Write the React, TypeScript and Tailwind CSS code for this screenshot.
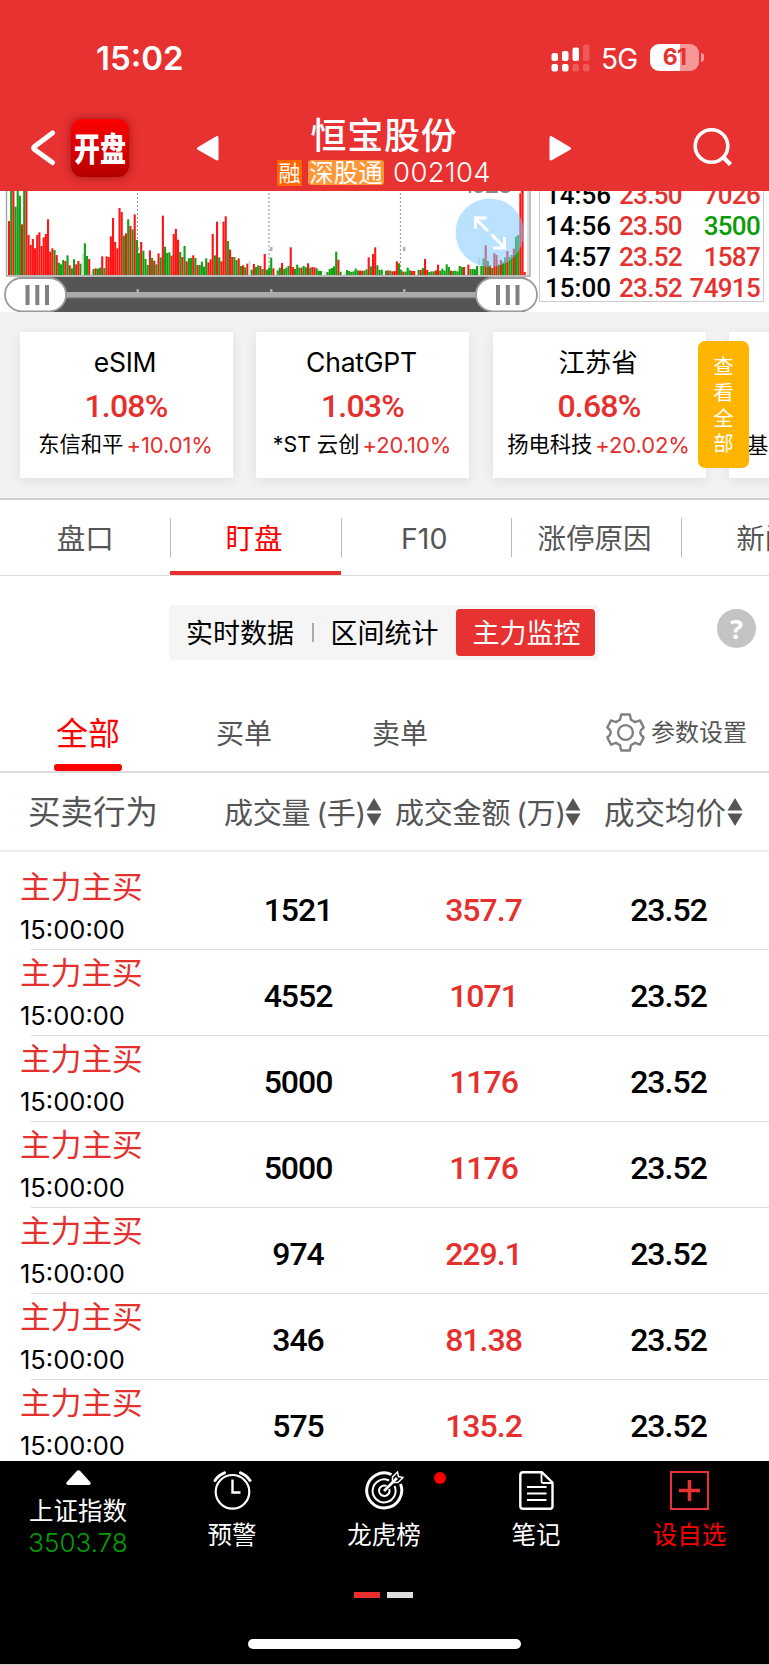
import { useState } from 'react';

type Trade = { time: string; price: string; volume: string; down?: boolean };

const trades: Trade[] = [
  { time: '14:56', price: '23.50', volume: '7026' },
  { time: '14:56', price: '23.50', volume: '3500', down: true },
  { time: '14:57', price: '23.52', volume: '1587' },
  { time: '15:00', price: '23.52', volume: '74915' },
];

const concepts = [
  { name: 'eSIM', change: '1.08%', stock: '东信和平', stockChange: '+10.01%' },
  { name: 'ChatGPT', change: '1.03%', stock: '*ST 云创', stockChange: '+20.10%' },
  { name: '江苏省', change: '0.68%', stock: '扬电科技', stockChange: '+20.02%' },
];

const orders = [
  { volume: '1521', amount: '357.7' },
  { volume: '4552', amount: '1071' },
  { volume: '5000', amount: '1176' },
  { volume: '5000', amount: '1176' },
  { volume: '974', amount: '229.1' },
  { volume: '346', amount: '81.38' },
  { volume: '575', amount: '135.2' },
];

// 成交量柱：颜色 + 顶部位置，n 为空
const volumeBars = (
  'r108 g0 r0 g65 g0 g32 r118 g0 r0 r150 r180 r162 r190 r150 r142 r183 r157 r147 r103 r200 ' +
  'r190 g195 r210 g233 g238 g225 r228 g211 r241 g250 g223 r238 r228 g236 w205 g175 g213 r222 w260 g252 ' +
  'r250 g251 g248 r214 g249 r214 r216 r154 r99 r171 r190 r69 r81 g152 r145 g103 r123 g133 r88 g165 ' +
  'g204 r171 g197 g222 g240 r196 g219 r227 g238 r205 g217 r92 g185 g204 g202 r212 r147 r132 r164 g201 ' +
  'r216 g183 r229 g220 g219 r211 g219 r240 g240 g230 g245 g220 r232 r223 r147 g211 r110 g217 r229 r110 ' +
  'r94 g168 r194 r216 g216 g225 r220 g243 r241 g247 r236 w228 g254 r237 g246 g241 r243 g252 r207 g254 ' +
  'g248 g218 r250 n g256 g248 r234 g252 g248 g243 r187 r246 g252 g239 g248 r248 g243 g247 r235 g248 ' +
  'r246 r247 g250 g257 g258 n w258 g261 g252 g249 g244 g200 r224 g260 n w262 g255 g258 g261 g259 ' +
  'g251 g256 r257 r257 g257 g253 r217 g244 r207 r187 g241 g255 g254 n g257 r256 g257 r259 r258 r229 ' +
  'g235 g255 r260 g260 g248 g256 r258 r258 n g255 r255 g249 r222 r255 g261 g259 g259 r256 r239 g257 ' +
  'g251 g257 g238 g246 r257 g258 g257 g259 g243 g246 r246 n r239 g252 g252 g253 g243 w218 g243 g220 ' +
  'r181 g228 r241 g249 r205 r210 g239 r225 g232 g217 r198 g216 g210 r191 g155 g150 r25 r0 r261'
).split(' ');

const barColors: Record<string, string> = { r: '#ff1414', g: '#12a012', w: '#dedede' };

function StatusBar() {
  return (
    <div className="flex h-[115px] items-center pl-[96px] pr-[65px] text-white">
      <span className="pt-[2px] text-[33px] font-semibold leading-none">15:02</span>
      <div className="ml-auto flex items-center">
        <svg width="39" height="28" viewBox="0 0 39 28" fill="#fff">
          <rect x="0.5" y="9" width="6.5" height="8" rx="2" />
          <rect x="11" y="7" width="6.5" height="10" rx="2" />
          <rect x="21.5" y="3.5" width="6.5" height="13.5" rx="2" />
          <rect x="32" y="0.5" width="6.5" height="16.5" rx="2" opacity="0.2" />
          <rect x="0.5" y="20" width="6.5" height="7.5" rx="2" />
          <rect x="11" y="20" width="6.5" height="7.5" rx="2" />
          <rect x="21.5" y="20" width="6.5" height="7.5" rx="2" opacity="0.2" />
          <rect x="32" y="20" width="6.5" height="7.5" rx="2" opacity="0.2" />
        </svg>
        <span className="ml-[11px] w-[37px] pt-[2px] text-[28px] leading-none tracking-[-0.8px]">5G</span>
        <div className="ml-[12px] flex h-[27px] w-[49px] items-center justify-center rounded-[9px] bg-[linear-gradient(90deg,#fff_62%,#f69898_62%)] text-[23px] font-bold leading-none tracking-[-0.8px] text-[#e83131]">
          61
        </div>
        <div className="ml-[2px] h-[9px] w-[3px] rounded-r-full bg-[#f69898]" />
      </div>
    </div>
  );
}

function TitleBar() {
  return (
    <div className="flex h-[76px] items-start pl-[30px] text-white">
      <svg className="mt-[14px]" width="28" height="38" viewBox="0 0 28 38" fill="none" stroke="#fff" strokeWidth="5" strokeLinecap="round" strokeLinejoin="round">
        <path d="M22.5 4 L4.5 17.5 Q3 19 4.5 20.5 L22.5 33.5" />
      </svg>
      <div className="ml-[13px] mt-[4px] flex h-[58px] w-[58px] items-center justify-center rounded-[11px] bg-linear-to-b from-[#ff0000] to-[#b40000] shadow-[0_0_9px_rgba(90,0,0,0.55)]">
        <span className="scale-y-[1.25] pt-[2px] text-[26px] font-black leading-none">开盘</span>
      </div>
      <svg className="ml-[67px] mt-[20px]" width="24" height="27" viewBox="0 0 24 27" fill="#fff" stroke="#fff" strokeWidth="3" strokeLinejoin="round">
        <path d="M2.5 13.5 L21 2.5 V24 Z" />
      </svg>
      <div className="ml-[54px] flex w-[220px] flex-col items-center">
        <h1 className="mt-[2px] text-[36px] font-medium leading-[38px] tracking-[0.8px]">恒宝股份</h1>
        <div className="mt-[4px] flex items-center">
          <span className="flex h-[26px] w-[25px] items-center justify-center bg-[#ff6600] text-[22px] leading-none">融</span>
          <span className="ml-[6px] flex h-[25px] w-[76px] items-center justify-center rounded-[3px] bg-[#ff9638] text-[24.5px] leading-none">深股通</span>
          <span className="ml-[9px] text-[27.5px] font-light leading-none tracking-[0.3px]">002104</span>
        </div>
      </div>
      <svg className="ml-[54px] mt-[20px]" width="24" height="27" viewBox="0 0 24 27" fill="#fff" stroke="#fff" strokeWidth="3" strokeLinejoin="round">
        <path d="M21.5 13.5 L3 2.5 V24 Z" />
      </svg>
      <svg className="ml-[121px] mt-[12px]" width="41" height="41" viewBox="0 0 41 41" fill="none" stroke="#fff" strokeWidth="3.6">
        <circle cx="18.5" cy="19" r="16.3" />
        <path d="M30 30 L37.5 37.5" strokeWidth="4.4" />
      </svg>
    </div>
  );
}

function VolumeChart() {
  return (
    <svg width="539" height="121" viewBox="0 0 539 121">
      <g stroke="#9e9e9e" strokeWidth="1.2" strokeDasharray="2 2">
        <path d="M137.5 2 V85" />
        <path d="M269 2 V85" />
        <path d="M400.5 2 V85" />
      </g>
      <g fill="#b0b0b0">
        <rect x="136.5" y="56" width="2.5" height="4" />
        <rect x="270" y="56" width="2.5" height="4" />
        <rect x="403" y="56" width="2.5" height="4" />
      </g>
      <text x="463" y="2.3" fontSize="25" fill="#888" fontFamily="Inter" textLength="64">15284</text>
      <g transform="translate(0 -6) scale(0.33333)">
        {volumeBars.map((bar, i) => {
          if (bar === 'n') return null;
          const top = Number(bar.slice(1));
          return <rect key={i} x={24 + i * 6.5} y={top} width="6.3" height={270 - top} fill={barColors[bar[0]]} />;
        })}
      </g>
      <path d="M528 0 V85" stroke="#ddd" strokeWidth="2" />
      <path d="M6.5 0 V85 H530 V0" fill="none" stroke="#a6a6a6" strokeWidth="1.4" />
      <circle cx="489.7" cy="41.7" r="34.2" fill="#7cc9ff" opacity="0.53" />
      <g fill="none" stroke="#fff" strokeWidth="3">
        <path d="M475.5 27.5 L488 40 M475.5 37.5 V27 H486.5" />
        <path d="M491.5 43.5 L504.5 56.5 M504.5 46 V57 H493.5" />
      </g>
      {/* 缩放滑块 */}
      <rect x="20" y="86" width="505" height="35" fill="#555" />
      <rect x="60" y="101" width="420" height="5" fill="#aaa" />
      <rect x="60" y="106" width="420" height="1.3" fill="#888" />
      <g fill="#aaa">
        <rect x="136.5" y="98" width="2.5" height="3" />
        <rect x="270" y="98" width="2.5" height="3" />
        <rect x="403" y="98" width="2.5" height="3" />
      </g>
      <g fill="#fff" stroke="#999" strokeWidth="1.8">
        <rect x="5" y="87" width="61" height="33.3" rx="16.6" />
        <rect x="476" y="87" width="61" height="33.3" rx="16.6" />
      </g>
      <g fill="#808080">
        {[25.5, 35.3, 45, 496, 505.8, 515.5].map((x) => (
          <rect key={x} x={x} y="94" width="4" height="20" />
        ))}
      </g>
    </svg>
  );
}

function TradeList() {
  return (
    <div className="h-[111px] w-[225px] overflow-hidden border-x-[1.5px] border-b-[1.5px] border-[#ccc]">
      <div className="-mt-[12px]">
        {trades.map((t, i) => (
          <div key={i} className="flex h-[31px] items-center pl-[5px] pr-[3px] font-[Roboto] text-[26px] font-medium leading-none">
            <span className="w-[74px] text-black">{t.time}</span>
            <span className="text-[#e5322f] tracking-[-0.7px]">{t.price}</span>
            <span className={`ml-auto tracking-[-0.7px] ${t.down ? 'text-[#0a9c0a]' : 'text-[#e5322f]'}`}>{t.volume}</span>
          </div>
        ))}
      </div>
    </div>
  );
}

function Concepts() {
  return (
    <section className="relative h-[188px] overflow-hidden border-b-2 border-[#cfcfcf] bg-[#f2f2f2] pl-[19.500px] pt-[20px]">
      <div className="flex gap-[23.5px]">
        {concepts.map((c) => (
          <div key={c.name} className="flex h-[146px] w-[213px] shrink-0 flex-col items-center bg-white shadow-[0_3px_12px_rgba(0,0,0,0.08)]">
            <div className="mt-[15px] flex h-[30px] items-center pr-[2px] text-[26.5px] leading-none tracking-[-0.2px] text-black">{c.name}</div>
            <div className="mt-[13px] flex h-[32px] items-center font-[Roboto] text-[32px] font-medium leading-none tracking-[-0.8px] text-[#e5302e]">{c.change}</div>
            <div className="mt-[10px] flex h-[26px] items-center whitespace-nowrap pr-[1px] text-[21.3px] leading-none text-black">
              {c.stock}
              <span className="ml-[3px] text-[22px] tracking-[-0.1px] text-[#e5302e]">{c.stockChange}</span>
            </div>
          </div>
        ))}
        <div className="flex h-[146px] w-[213px] shrink-0 items-start bg-white pl-[18px] pt-[100px] text-[21.3px] leading-[26px] text-black shadow-[0_3px_12px_rgba(0,0,0,0.08)]">基</div>
      </div>
      <button className="absolute left-[698px] top-[29px] flex h-[127px] w-[51px] flex-col items-center justify-center rounded-[7px] bg-[#ffb400] pt-[2px] text-[20.5px] leading-[25.7px] text-white">
        <span>查</span>
        <span>看</span>
        <span>全</span>
        <span>部</span>
      </button>
    </section>
  );
}

function MainTabs() {
  const tabs = ['盘口', '盯盘', 'F10', '涨停原因', '新闻'];
  const [active, setActive] = useState(1);

  return (
    <nav className="flex h-[76px] w-full overflow-hidden border-b border-[#ddd]">
      {tabs.map((tab, i) => (
        <button
          key={tab}
          onClick={() => setActive(i)}
          className={`flex w-[170.3px] shrink-0 flex-col text-[28.5px] leading-none ${i === active ? 'text-[#ff0000]' : 'text-[#555]'}`}
        >
          <span className={`mt-[18px] flex h-[39px] w-full items-center justify-center pt-[3px] ${i > 0 ? 'border-l-[1.5px] border-[#bbb] pr-[4px]' : ''}`}>{tab}</span>
          {i === active && <span className="mt-[14px] h-[4px] w-full bg-[#ea2e2e]" />}
        </button>
      ))}
    </nav>
  );
}

function Segments() {
  return (
    <div className="flex h-[84px] items-end pl-[169px] pr-[13px]">
      <div className="flex h-[55px] w-[430px] items-center rounded-[4px] bg-[#f5f5f5] text-[27px] leading-none text-black">
        <span className="ml-[17px] pt-[2px]">实时数据</span>
        <span className="ml-[18px] h-[19px] w-[1.5px] bg-[#aaa]" />
        <span className="ml-[17px] pt-[2px]">区间统计</span>
        <span className="ml-[17px] flex h-[47px] w-[139px] items-center justify-center rounded-[4px] bg-[#e83131] pl-[3px] pt-[2px] text-white">主力监控</span>
      </div>
      <span className="mb-[12px] ml-auto flex h-[39px] w-[39px] items-center justify-center rounded-full bg-[#c4c4c4] font-['Noto_Sans'] text-[27px] font-bold leading-none text-white">?</span>
    </div>
  );
}

function GearIcon() {
  return (
    <svg width="39" height="39" viewBox="0 0 39 39" fill="none" stroke="#808080" strokeWidth="2.4" strokeLinejoin="round">
      <path d="M15.2 1.5 H23.8 L25 6.8 L29 9.1 L34 7.4 L37.7 14.5 Q34.3 17 34.3 19.5 Q34.3 22 37.7 24.5 L34 31.6 L29 29.9 L25 32.2 L23.8 37.5 H15.2 L14 32.2 L10 29.9 L5 31.6 L1.3 24.5 Q4.7 22 4.7 19.5 Q4.7 17 1.3 14.5 L5 7.4 L10 9.1 L14 6.8 Z" />
      <circle cx="19.5" cy="19.5" r="7.4" />
    </svg>
  );
}

function FilterTabs() {
  return (
    <div className="flex h-[113px] border-b-2 border-[#dcdcdc] text-[28px] leading-none text-[#555]">
      <div className="ml-[54px] flex w-[68px] flex-col items-center text-[32px] text-[#ff0000]">
        <span className="mt-[57px] flex h-[34px] items-center">全部</span>
        <span className="mt-auto h-[7px] w-full rounded-[3px] bg-[#ff0000]" />
      </div>
      <span className="ml-[94px] mt-[57px] flex h-[34px] items-center">买单</span>
      <span className="ml-[100px] mt-[57px] flex h-[34px] items-center">卖单</span>
      <div className="ml-auto mr-[22px] mt-[53px] flex h-[39px] items-center gap-[6px] text-[24px]">
        <GearIcon />
        <span className="pt-[1px]">参数设置</span>
      </div>
    </div>
  );
}

function SortIcon() {
  return (
    <svg className="ml-[1px] shrink-0" width="16" height="28" viewBox="0 0 16 28" fill="#555">
      <path d="M8 0 L15.5 12.5 H0.5 Z M0.5 15.5 H15.5 L8 28 Z" />
    </svg>
  );
}

function OrderTable() {
  return (
    <section className="h-[688px] overflow-hidden">
      <div className="flex h-[79px] items-center whitespace-nowrap border-b-2 border-[#eee] pl-[28px] text-[29px] leading-none text-[#555]">
        <span className="w-[196px] pt-[4px] text-[32.5px]">买卖行为</span>
        <span className="flex w-[171px] items-center">
          <span className="flex w-[141px] pt-[3px] tracking-[-0.2px]">成交量<span className="ml-[6px]">(手)</span></span>
          <SortIcon />
        </span>
        <span className="flex w-[209px] items-center">
          <span className="flex w-[169px] pt-[3px] tracking-[-0.2px]">成交金额<span className="ml-[6px]">(万)</span></span>
          <SortIcon />
        </span>
        <span className="flex items-center text-[30.5px]">
          <span className="pt-[3px]">成交均价</span>
          <SortIcon />
        </span>
      </div>
      <div className="pt-[12px]">
        {orders.map((o, i) => (
          <div key={i} className="h-[86px]">
            <div className="grid h-[85px] grid-cols-[206px_185px_185px_186px] font-[Roboto] text-[32px] font-medium leading-none tracking-[-1px] text-black">
              <div className="flex flex-col pl-[20px] font-[Inter,'Noto_Sans_CJK_SC',sans-serif] font-normal tracking-normal">
                <span className="mt-[7px] flex h-[32px] items-center text-[30.7px] text-[#e5302e]">主力主买</span>
                <span className="mt-[14px] flex h-[26px] items-center text-[25.5px]">15:00:00</span>
              </div>
              <span className="mt-[30px] pr-[1px] text-center">{o.volume}</span>
              <span className="mt-[30px] text-center text-[#e5302e]">{o.amount}</span>
              <span className="mt-[30px] pr-[1px] text-center">23.52</span>
            </div>
            <div className="ml-[31px] h-px bg-[#dedede]" />
          </div>
        ))}
      </div>
    </section>
  );
}

function BottomNav() {
  return (
    <footer className="flex h-[204px] flex-col border-b border-[#ccc] bg-black text-white">
      <div className="grid h-[131px] grid-cols-[156px_152px_152px_152px_157px] text-[24.5px] leading-none">
        <div className="flex flex-col items-center">
          <svg className="mt-[9px]" width="25" height="15" viewBox="0 0 25 15" fill="#fff">
            <path d="M10.8 1 Q12.5 -0.5 14.2 1 L24.6 12.5 Q25 15 23 15 H2 Q0 15 0.4 12.5 Z" />
          </svg>
          <span className="mt-[13px] flex h-[26px] items-center">上证指数</span>
          <span className="mt-[6px] flex h-[26px] items-center text-[26px] font-light text-[#00a000]">3503.78</span>
        </div>
        <div className="flex flex-col items-center">
          <svg className="mt-[10px]" width="39" height="39" viewBox="0 0 39 39" fill="none" stroke="#fff" strokeWidth="2.2" strokeLinecap="round">
            <circle cx="19.5" cy="20.8" r="16.8" />
            <path d="M19.5 8.5 V21.5 H27.5" strokeWidth="2.4" strokeLinecap="butt" />
            <path d="M2 9.5 Q5.5 4 11.5 1.8 M27.5 1.8 Q33.5 4 37 9.5" strokeWidth="3" />
          </svg>
          <span className="mt-[12px] flex h-[26px] items-center">预警</span>
        </div>
        <div className="relative flex flex-col items-center">
          <svg className="mt-[10px]" width="39" height="39" viewBox="0 0 39 39" fill="none" stroke="#fff" strokeWidth="2.2">
            <path d="M26.5 3.5 A17.5 17.5 0 1 0 35.5 13" strokeWidth="3" />
            <path d="M24 9.5 A11.5 11.5 0 1 0 29.5 15" strokeWidth="2" />
            <path d="M21.5 14.9 A5.3 5.3 0 1 0 24.3 18" strokeWidth="2" />
            <path d="M19 20 L32 7" strokeWidth="2.6" />
            <path d="M27.5 11 V6 L32.5 1 L33.5 5.5 L38 6.5 L33 11.5 H27.5" strokeWidth="1.5" />
          </svg>
          <span className="mt-[12px] flex h-[26px] items-center">龙虎榜</span>
          <span className="absolute left-[126px] top-[11px] h-[12px] w-[12px] rounded-full bg-[#ff0000]" />
        </div>
        <div className="flex flex-col items-center">
          <svg className="mt-[10px]" width="35" height="39" viewBox="0 0 35 39" fill="none" stroke="#fff" strokeWidth="2.4" strokeLinejoin="round">
            <path d="M4 1.3 H23 L33.5 11.5 V35 Q33.5 37.7 31 37.7 H4 Q1.3 37.7 1.3 35 V4 Q1.3 1.3 4 1.3 Z" />
            <path d="M22.5 2 V10 Q22.5 12 24.5 12 H33" strokeWidth="1.8" />
            <path d="M8 16 H27.5 M8 22.5 H27.5 M8 29 H27.5" strokeWidth="1.9" />
          </svg>
          <span className="mt-[12px] flex h-[26px] items-center">笔记</span>
        </div>
        <div className="flex flex-col items-center pr-[2px] text-[#ff0000]">
          <svg className="mt-[10px]" width="39" height="39" viewBox="0 0 39 39" fill="none" stroke="#e83131">
            <rect x="1" y="1" width="37" height="37" strokeWidth="2" />
            <path d="M19.5 9 V30 M9 19.5 H30" strokeWidth="3.6" />
          </svg>
          <span className="mt-[12px] flex h-[26px] items-center">设自选</span>
        </div>
      </div>
      <div className="flex justify-center gap-[7px] pr-[2px]">
        <span className="h-[6px] w-[26px] bg-[#ea2e2e]" />
        <span className="h-[6px] w-[26px] bg-[#ddd]" />
      </div>
      <div className="mx-auto mt-[41px] h-[10px] w-[273px] rounded-full bg-white" />
    </footer>
  );
}

export default function App() {
  return (
    <div className="h-[1665px] w-[769px] overflow-hidden bg-white font-[Inter,'Noto_Sans_CJK_SC',sans-serif]">
      <header className="h-[191px] bg-[#e83131]">
        <StatusBar />
        <TitleBar />
      </header>
      <div className="flex h-[121px]">
        <VolumeChart />
        <TradeList />
      </div>
      <Concepts />
      <MainTabs />
      <Segments />
      <FilterTabs />
      <OrderTable />
      <BottomNav />
    </div>
  );
}
